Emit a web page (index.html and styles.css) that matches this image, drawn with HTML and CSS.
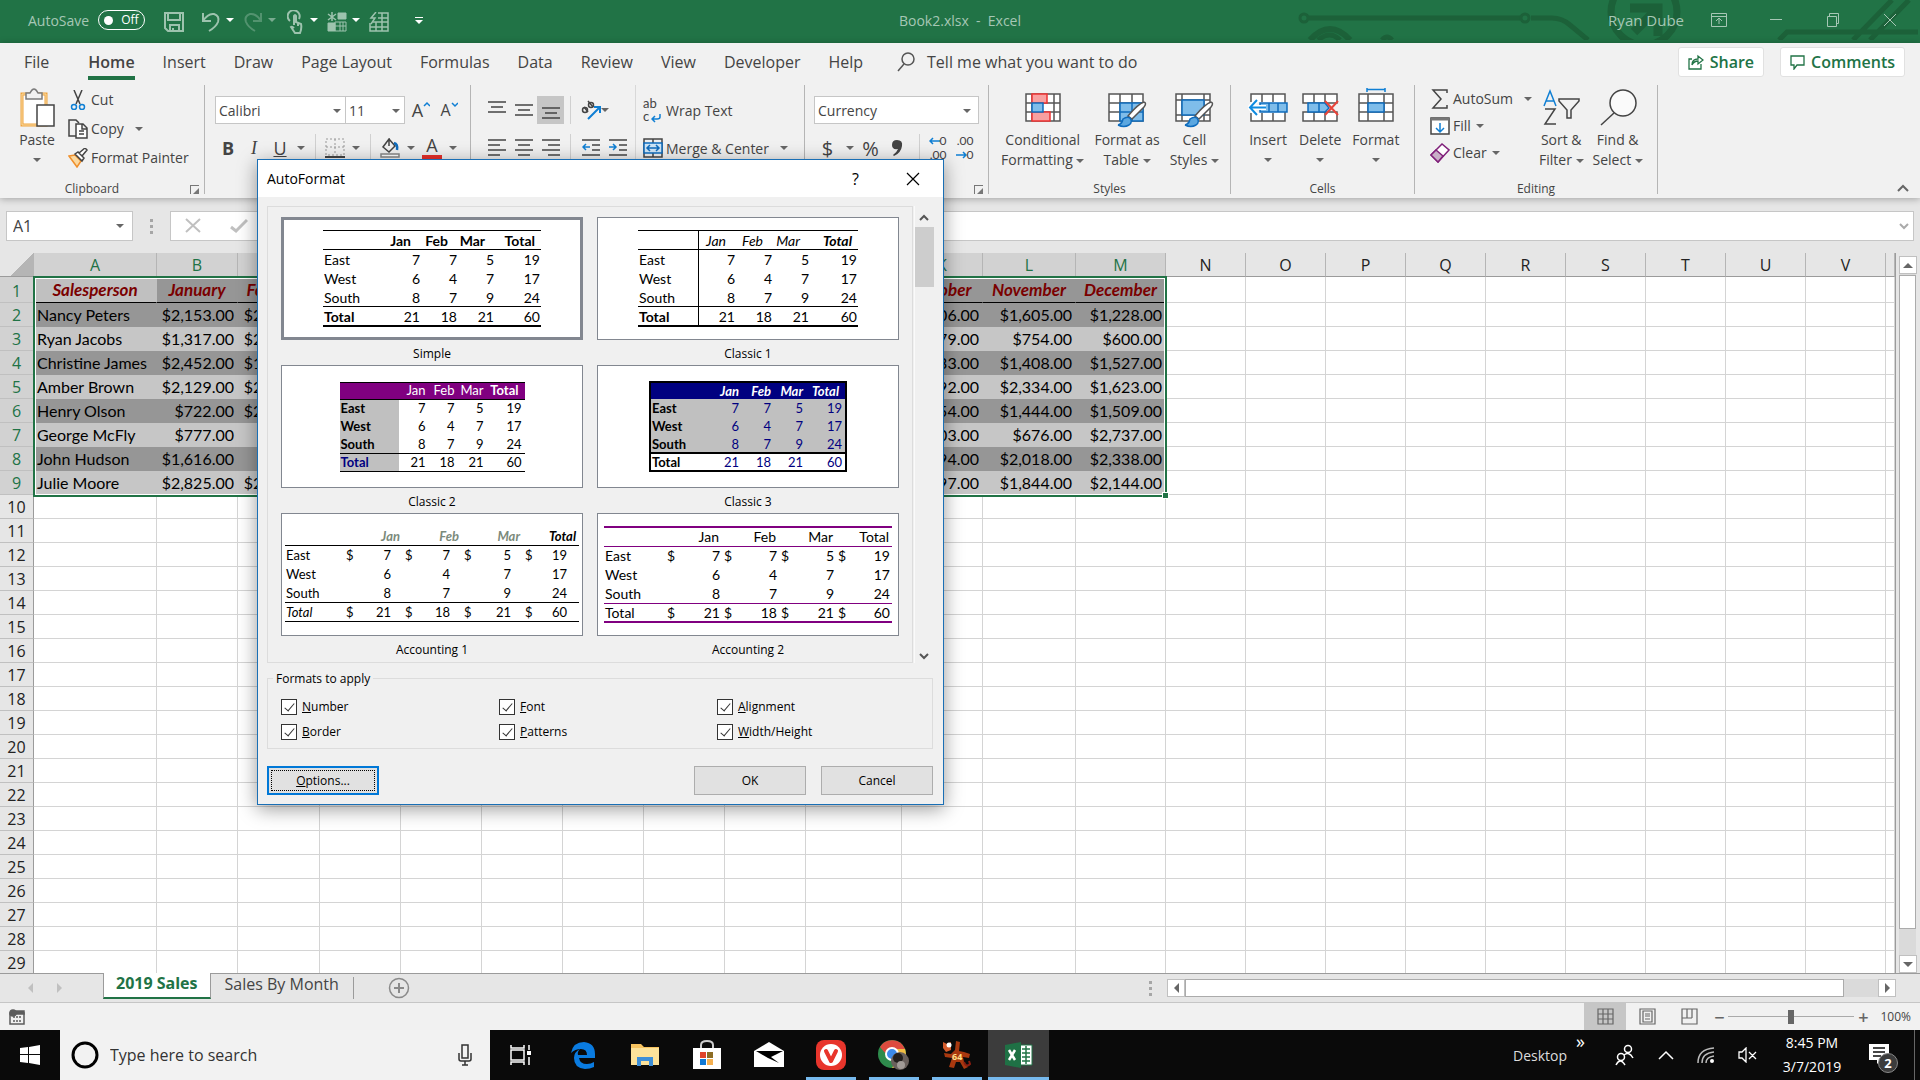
FILE: index.html
```html
<!DOCTYPE html>
<html lang="en">
<head>
    <meta charset="UTF-8">
    <meta name="viewport" content="width=device-width, initial-scale=1.0">
    <title>Book2.xlsx - Excel</title>
    <link rel="stylesheet" href="styles.css">
</head>
<body>
    <header class="titlebar">
        <svg class="circuit" width="624" height="40" viewBox="0 0 624 40" fill="none" stroke="#1c6139" stroke-width="5">
            <circle cx="8" cy="18" r="4" stroke-width="3"/>
            <path d="M13 18H224M235 18H256Q266 18 274 25L292 40"/>
            <circle cx="229" cy="18" r="4" stroke-width="3"/>
            <path d="M14 40Q34 18 54 40" stroke-width="6"/><path d="M22 40Q34 30 44 40M86 40Q91 34 96 40"/>
            <circle cx="348" cy="12" r="33" stroke-width="7"/>
            <path d="M334 8H362V36M362 8L338 32" stroke-width="9"/>
            <path d="M483 40L491 32H622M557 40L596 0M574 40L613 0"/>
        </svg>
        <div class="title-left">
            <span class="autosave">AutoSave</span>
            <button class="toggle"><span class="dot"></span>Off</button>
            <button class="qa save"><svg width="20" height="20" viewBox="0 0 20 20" fill="none" stroke="currentColor" stroke-width="2"><path d="M1 1h18v18H4l-3-3zM4 1v7h12V1M6 19v-6h9v6M9 19v-3"/></svg></button>
            <button class="qa"><svg width="20" height="22" viewBox="0 0 20 22" fill="none" stroke="currentColor" stroke-width="2"><path d="M2 2v8h8M2 10Q7 2 13 3Q19 5 17 11Q15 16 8 20"/></svg></button>
            <span class="caret light"></span>
            <button class="qa dim"><svg width="20" height="22" viewBox="0 0 20 22" fill="none" stroke="currentColor" stroke-width="2"><path d="M18 2v8h-8M18 10Q13 2 7 3Q1 5 3 11Q5 16 12 20"/></svg></button>
            <span class="caret light dim"></span>
            <button class="qa"><svg width="16" height="24" viewBox="0 0 16 24" fill="none" stroke="currentColor" stroke-width="2"><path d="M3 11A6 6 0 1 1 12 9"/><path d="M7 15V6q1-2 2 0v6l5 2q1 4-1 9H8l-4-6q1-1 3 1M11 12v4"/></svg></button>
            <span class="caret light"></span>
            <button class="qa"><svg width="20" height="20" viewBox="0 0 20 20" fill="none" stroke="currentColor"><path fill="currentColor" d="M11 1h8v6h-8zM1 11h7v8H1z"/><path d="M5 0v9M1 2l8 6M9 2L1 8" stroke-width="1.500"/><path d="M8 10h11v9H8zM8 14h11M13 10v9M16 10v9"/></svg></button>
            <span class="caret light"></span>
            <button class="qa"><svg width="20" height="20" viewBox="0 0 20 20" fill="none" stroke="currentColor" stroke-width="1.500"><path d="M9 1h10v18H1v-8M1 15h18M4 10h15M9 6h10M7 10v9M13 1v18"/><path d="M7 0L2 6h4l-4 6" /></svg></button>
            <span class="customize"><i></i><span class="caret light"></span></span>
        </div>
        <div class="title-name">Book2.xlsx&nbsp; -&nbsp; Excel</div>
        <div class="title-right">
            <span class="user">Ryan Dube</span>
            <button class="win"><svg width="16" height="14" viewBox="0 0 16 14" fill="none" stroke="currentColor"><path d="M.5.500h15v13H.5zM.5 3.500h15M8 11V6M5 8l3-3 3 3"/></svg></button>
            <button class="win"><svg width="14" height="14" viewBox="0 0 14 14" stroke="currentColor"><path d="M1 6.500h12"/></svg></button>
            <button class="win"><svg width="14" height="14" viewBox="0 0 14 14" fill="none" stroke="currentColor"><path d="M1.500 3.500h9v10h-9zM3.500 3V.5h9v10H11"/></svg></button>
            <button class="win"><svg width="14" height="14" viewBox="0 0 14 14" stroke="currentColor"><path d="M1 1l12 12M13 1L1 13"/></svg></button>
        </div>
    </header>

    <section class="ribbon">
        <nav class="tabs">
            <a href="#" class="file">File</a>
            <a href="#" class="active">Home</a>
            <a href="#">Insert</a>
            <a href="#">Draw</a>
            <a href="#">Page Layout</a>
            <a href="#">Formulas</a>
            <a href="#">Data</a>
            <a href="#">Review</a>
            <a href="#">View</a>
            <a href="#">Developer</a>
            <a href="#">Help</a>
            <a href="#" class="tell"><svg width="18" height="20" viewBox="0 0 18 20" fill="none" stroke="#555" stroke-width="1.500"><circle cx="11" cy="7" r="6"/><path d="M7 12L1 19"/></svg>Tell me what you want to do</a>
            <button class="pill share"><svg width="16" height="16" viewBox="0 0 16 16" fill="none" stroke="#217346" stroke-width="1.300"><path d="M4 5H1v10h12v-5M4 11q0-6 6-6V2l5 4-5 4V7Q6 7 4 11"/></svg>Share</button>
            <button class="pill"><svg width="15" height="15" viewBox="0 0 15 15" fill="none" stroke="#217346" stroke-width="1.300"><path d="M1 1h13v9H7l-3 4v-4H1z"/></svg>Comments</button>
        </nav>

        <div class="groups">
            <div class="group clipboard">
                <div class="body">
                    <button class="big paste">
                        <svg width="36" height="40" viewBox="0 0 36 40"><path d="M3 6h24v31H3z" fill="#fff" stroke="#f0a33c" stroke-width="3"/><path d="M3 6h24v31H3z" fill="none" stroke="#f8dca6" /><path d="M7 11V5h4q4-8 8 0h4v6z" fill="#f1f1f1" stroke="#7b7b7b" stroke-width="1.500"/><path d="M18 17h17v21H18z" fill="#fff" stroke="#444" stroke-width="1.500"/></svg>
                        <span>Paste</span><span class="caret"></span>
                    </button>
                    <div class="stack">
                        <button class="line"><svg width="20" height="20" viewBox="0 0 20 20" fill="none" stroke="#444" stroke-width="1.500"><path d="M6 0l6 14M14 0L8 14"/><circle cx="6" cy="17" r="2.500" stroke="#0f7fd4"/><circle cx="14" cy="17" r="2.500" stroke="#0f7fd4"/></svg>Cut</button>
                        <button class="line"><svg width="20" height="20" viewBox="0 0 20 20" fill="none" stroke="#444" stroke-width="1.500"><path d="M8 17H1V1h7l3 3"/><path d="M8 5h7l4 4v10H8zM14 5v5h5M11 12h5M11 15h5" fill="#fff"/></svg>Copy<span class="caret"></span></button>
                        <button class="line"><svg width="20" height="20" viewBox="0 0 20 20" fill="none" stroke="#444" stroke-width="1.500"><path d="M1 8l6-1 6 6-4 6z" fill="#fbd9a0" stroke="#f0902c"/><path d="M7 6l7 7 2-3-6-6zM11 5l6-5 2 2-5 6" fill="#fff"/></svg>Format Painter</button>
                    </div>
                </div>
                <div class="label">Clipboard<i class="launch"></i></div>
            </div>

            <div class="group font">
                <div class="body col">
                    <div class="row">
                        <span class="combo face"><select aria-label="Font"><option>Calibri</option></select><i class="caret"></i></span>
                        <span class="combo size"><select aria-label="Font size"><option>11</option></select><i class="caret"></i></span>
                        <button class="tool"><span class="glyph">A</span><svg width="7" height="18" viewBox="0 0 7 18" fill="none" stroke="#0f7fd4" stroke-width="1.500"><path d="M1 5l3-3 3 3"/></svg></button>
                        <button class="tool"><span class="glyph small">A</span><svg width="7" height="18" viewBox="0 0 7 18" fill="none" stroke="#0f7fd4" stroke-width="1.500"><path d="M1 2l3 3 3-3"/></svg></button>
                    </div>
                    <div class="row second">
                        <button class="tool"><b>B</b></button>
                        <button class="tool"><em class="italic">I</em></button>
                        <button class="tool"><u>U</u></button>
                        <i class="caret"></i><i class="sep"></i>
                        <button class="tool"><svg width="20" height="20" viewBox="0 0 20 20" stroke="#999" fill="none"><path d="M1 1h18v16H1zM10 1v16M1 9h18" stroke-dasharray="2 2"/><path d="M0 19h20" stroke="#444" stroke-width="2"/></svg></button>
                        <i class="caret"></i><i class="sep"></i>
                        <button class="tool"><svg width="20" height="20" viewBox="0 0 20 20" fill="none" stroke="#444" stroke-width="1.500"><path d="M9 1l6 7-6 6-6-5 6-8v7"/><path d="M14 5q4 1 3 7" stroke="#0f6cbd" stroke-width="2.500"/><path d="M1 16h18v3H1z" fill="#fff" stroke="#888"/></svg></button>
                        <i class="caret"></i>
                        <button class="tool"><span class="fontcolor">A</span></button>
                        <i class="caret"></i>
                    </div>
                </div>
            </div>

            <div class="group align">
                <div class="body">
                    <div class="col">
                        <div class="row">
                            <button class="tool"><svg width="18" height="18" viewBox="0 0 18 18" stroke="#444" stroke-width="1.500"><path d="M0 1h18M3 6h12M0 11h18"/></svg></button>
                            <button class="tool"><svg width="18" height="18" viewBox="0 0 18 18" stroke="#444" stroke-width="1.500"><path d="M0 4h18M3 9h12M0 14h18"/></svg></button>
                            <button class="tool pressed"><svg width="18" height="18" viewBox="0 0 18 18" stroke="#444" stroke-width="1.500"><path d="M0 7h18M3 12h12M0 17h18"/></svg></button>
                            <i class="sep"></i>
                            <button class="tool"><svg width="20" height="20" viewBox="0 0 20 20" fill="none" stroke="#444" stroke-width="1.500"><circle cx="4" cy="10" r="2.500"/><path d="M3 7l4 5M7 1l5 6"/><circle cx="10" cy="5" r="2.500"/><path d="M7 19L19 7M13 7h6v6" stroke="#0f7fd4" stroke-width="2"/></svg></button>
                            <i class="caret"></i>
                        </div>
                        <div class="row second">
                            <button class="tool"><svg width="18" height="18" viewBox="0 0 18 18" stroke="#444" stroke-width="1.500"><path d="M0 1h18M0 6h12M0 11h18M0 16h12"/></svg></button>
                            <button class="tool"><svg width="18" height="18" viewBox="0 0 18 18" stroke="#444" stroke-width="1.500"><path d="M0 1h18M3 6h12M0 11h18M3 16h12"/></svg></button>
                            <button class="tool"><svg width="18" height="18" viewBox="0 0 18 18" stroke="#444" stroke-width="1.500"><path d="M0 1h18M6 6h12M0 11h18M6 16h12"/></svg></button>
                            <i class="sep"></i>
                            <button class="tool"><svg width="18" height="18" viewBox="0 0 18 18" fill="none" stroke="#444" stroke-width="1.500"><path d="M0 1h18M10 6h8M10 11h8M0 16h18"/><path d="M8 8H1M4 5L1 8l3 3" stroke="#0f7fd4"/></svg></button>
                            <button class="tool"><svg width="18" height="18" viewBox="0 0 18 18" fill="none" stroke="#444" stroke-width="1.500"><path d="M0 1h18M10 6h8M10 11h8M0 16h18"/><path d="M0 8h7M4 5l3 3-3 3" stroke="#0f7fd4"/></svg></button>
                        </div>
                    </div>
                    <div class="col wrapcol">
                        <button class="row line"><span class="abc">ab<br>c<svg width="10" height="9" viewBox="0 0 10 9" fill="none" stroke="#0f7fd4" stroke-width="1.500"><path d="M9 0v3q0 2-3 2H1M4 2L1 5l3 3"/></svg></span>Wrap Text</button>
                        <button class="row second line"><svg width="20" height="20" viewBox="0 0 20 20" fill="none" stroke="#444" stroke-width="1.500"><path d="M1 1h18v18H1zM10 1v4M10 15v4"/><path d="M1 5h18v10H1z" fill="#cfe6f7" stroke="#0f6cbd"/><path d="M4 10h12M7 7l-3 3 3 3M13 7l3 3-3 3" stroke="#0f6cbd"/></svg>Merge &amp; Center<span class="caret"></span></button>
                    </div>
                </div>
            </div>

            <div class="group number">
                <div class="body col">
                    <div class="row"><span class="combo wide"><select aria-label="Number format"><option>Currency</option></select><i class="caret"></i></span></div>
                    <div class="row second">
                        <button class="tool"><span class="sign">$</span></button><i class="caret"></i>
                        <button class="tool"><span class="sign">%</span></button>
                        <button class="tool"><svg width="11" height="16" viewBox="0 0 11 16"><path d="M5 0Q11 0 10 6Q9 13 2 16L1 15Q5 12 6 9Q0 10 0 5Q0 0 5 0" fill="#444"/></svg></button>
                        <i class="sep"></i>
                        <button class="tool"><span class="dec"><svg width="11" height="8" viewBox="0 0 11 8" fill="none" stroke="#0f7fd4" stroke-width="1.500"><path d="M11 4H1M4 1L1 4l3 3"/></svg>0<br>.00</span></button>
                        <button class="tool"><span class="dec">.00<br><svg width="11" height="8" viewBox="0 0 11 8" fill="none" stroke="#0f7fd4" stroke-width="1.500"><path d="M0 4h10M7 1l3 3-3 3"/></svg>0</span></button>
                    </div>
                </div>
                <div class="label"><i class="launch"></i></div>
            </div>

            <div class="group styles">
                <div class="body">
                    <button class="big">
                        <svg width="40" height="40" viewBox="0 0 40 40" fill="none" stroke="#555" stroke-width="1.500"><path d="M3 6h34v27H3zM9 6v27M31 6v27M3 15h34M3 24h34" fill="#fff"/><path d="M9 6h15v9H9zM9 24h18v9H9z" fill="#f8a0a0" stroke="#e33"/><path d="M9 15h11v9H9z" fill="#7fbdea" stroke="#0f6cbd"/></svg>
                        <span>Conditional</span><span>Formatting <i class="caret"></i></span>
                    </button>
                    <button class="big">
                        <svg width="40" height="40" viewBox="0 0 40 40" fill="none" stroke="#555" stroke-width="1.500"><path d="M2 6h34v27H2zM13 6v27M25 6v27M2 15h34M2 24h34" fill="#fff"/><path d="M13 15h23v18H13zM13 24h23M25 15v18" fill="#7fbdea" stroke="#0f6cbd"/><path d="M37 14q3 1 0 5L25 31l-4-3Q31 16 37 14" fill="#fff"/><path d="M11 37q4-1 5-6 4-3 7-1 3 4-1 7-5 3-11 0" fill="#5ba7e0" stroke="#0f6cbd"/></svg>
                        <span>Format as</span><span>Table <i class="caret"></i></span>
                    </button>
                    <button class="big">
                        <svg width="40" height="40" viewBox="0 0 40 40" fill="none" stroke="#555" stroke-width="1.500"><path d="M2 6h34v27H2zM8 6v27M30 6v27M2 12h34M2 27h34" fill="#fff"/><path d="M8 12h22v15H8z" fill="#7fbdea" stroke="#0f6cbd"/><path d="M37 14q3 1 0 5L25 31l-4-3Q31 16 37 14" fill="#fff"/><path d="M11 37q4-1 5-6 4-3 7-1 3 4-1 7-5 3-11 0" fill="#5ba7e0" stroke="#0f6cbd"/></svg>
                        <span>Cell</span><span>Styles <i class="caret"></i></span>
                    </button>
                </div>
                <div class="label">Styles</div>
            </div>

            <div class="group cells">
                <div class="body">
                    <button class="big">
                        <svg width="40" height="40" viewBox="0 0 40 40" fill="none" stroke="#555" stroke-width="1.500"><path d="M3 14V6h34v9M3 25v8h34v-9M14 6v8M25 6v8M14 25v8M25 25v8" fill="#fff"/><path d="M12 15h27v9H12zM21 15v9M30 15v9" fill="#7fbdea" stroke="#0f6cbd"/><path d="M18 19.500H2M9 12l-7 7.500L9 27" stroke="#fff" stroke-width="5"/><path d="M18 19.500H2M9 12l-7 7.500L9 27" stroke="#0f8be0" stroke-width="2"/></svg>
                        <span>Insert</span><span class="caret"></span>
                    </button>
                    <button class="big">
                        <svg width="40" height="40" viewBox="0 0 40 40" fill="none" stroke="#555" stroke-width="1.500"><path d="M3 15V6h34v9zM3 24v9h34v-9zM14 6v9M25 6v9M14 24v9M25 24v9" fill="#fff"/><path d="M8 15h17l4 5-4 4H8zM19 15v9" fill="#7fbdea" stroke="#0f6cbd"/><path d="M25 13l13 14M38 13L25 27" stroke="#e8443a" stroke-width="2"/></svg>
                        <span>Delete</span><span class="caret"></span>
                    </button>
                    <button class="big">
                        <svg width="40" height="40" viewBox="0 0 40 40" fill="none" stroke="#555" stroke-width="1.500"><path d="M3 6h34v27H3zM12 6v27M28 6v27M3 15h34M3 24h34" fill="#fff"/><path d="M12 15h16v9H12z" fill="#7fbdea" stroke="#0f6cbd"/><path d="M11 1.500h18M11 0v4M29 0v4" stroke="#0f7fd4"/></svg>
                        <span>Format</span><span class="caret"></span>
                    </button>
                </div>
                <div class="label">Cells</div>
            </div>

            <div class="group editing">
                <div class="body">
                    <div class="stack">
                        <button class="line"><svg width="20" height="20" viewBox="0 0 20 20" fill="none" stroke="#444" stroke-width="1.500"><path d="M17 4V1H3l8 9-8 9h14v-3"/></svg>AutoSum<span class="caret far"></span></button>
                        <button class="line"><svg width="20" height="18" viewBox="0 0 20 18" fill="none" stroke="#444" stroke-width="1.500"><path d="M1 1h18v16H1z" fill="#fff"/><path d="M1 2h18" stroke-width="3" stroke="#777"/><path d="M10 6v8M6 11l4 4 4-4" stroke="#0f7fd4"/></svg>Fill<span class="caret"></span></button>
                        <button class="line"><svg width="20" height="20" viewBox="0 0 20 20" stroke="#80207a" stroke-width="1.500"><path d="M1 12L12 1l7 6L8 19z" fill="#fff"/><path d="M1 12l5-5 7 6-5 6z" fill="#c9aec7"/></svg>Clear<span class="caret"></span></button>
                    </div>
                    <button class="big">
                        <svg width="40" height="40" viewBox="0 0 40 40" fill="none" stroke="#444" stroke-width="1.500"><path d="M3 18L9 3l6 15M5 13h8" stroke="#0f7fd4"/><path d="M4 21h10L4 36h11M18 11h20v2l-8 9v8h-4v-8l-8-9z"/></svg>
                        <span>Sort &amp;</span><span>Filter <i class="caret"></i></span>
                    </button>
                    <button class="big">
                        <svg width="40" height="40" viewBox="0 0 40 40" fill="none" stroke="#444" stroke-width="1.500"><circle cx="25" cy="15" r="13" fill="#fafafa"/><path d="M16 25L3 37"/></svg>
                        <span>Find &amp;</span><span>Select <i class="caret"></i></span>
                    </button>
                </div>
                <div class="label">Editing</div>
            </div>
            <button class="collapse"><svg width="12" height="8" viewBox="0 0 12 8" fill="none" stroke="#666" stroke-width="2"><path d="M1 7l5-5 5 5"/></svg></button>
        </div>
    </section>

    <section class="formulabar">
        <span class="combo namebox"><input type="text" value="A1" aria-label="Name box"><i class="caret"></i></span>
        <span class="dots"><i></i><i></i><i></i></span>
        <div class="formula">
            <svg width="18" height="16" viewBox="0 0 18 16" stroke="#c0c0c0" stroke-width="2"><path d="M2 1l14 13M16 1L2 14"/></svg>
            <svg width="18" height="16" viewBox="0 0 18 16" fill="none" stroke="#c0c0c0" stroke-width="3"><path d="M1 9l5 4L17 2"/></svg>
            <input type="text" aria-label="Formula">
            <svg width="10" height="7" viewBox="0 0 10 7" fill="none" stroke="#aaa" stroke-width="2"><path d="M1 1l4 4 4-4"/></svg>
        </div>
    </section>

    <main class="sheet">
        <div class="gridwrap">
            <table class="grid">
                <colgroup id="gridCols"></colgroup>
                <thead><tr id="gridHead"></tr></thead>
                <tbody id="gridBody"></tbody>
            </table>
            <div class="selection"></div>
        </div>
        <div class="vscroll">
            <button><i class="tri up"></i></button>
            <div class="track"><div class="thumb"></div></div>
            <button><i class="tri down"></i></button>
        </div>
    </main>

    <section class="sheettabs">
        <i class="tri left pale"></i><i class="tri right pale"></i>
        <a href="#" class="sheettab current">2019 Sales</a>
        <a href="#" class="sheettab">Sales By Month</a>
        <button class="addsheet" aria-label="New sheet"><svg width="22" height="22" viewBox="0 0 22 22" fill="none" stroke="#8a8a8a" stroke-width="1.500"><circle cx="11" cy="11" r="9.500"/><path d="M6 11h10M11 6v10" stroke-width="2"/></svg></button>
        <span class="dots"><i></i><i></i><i></i></span>
        <div class="hscroll">
            <button><i class="tri left"></i></button>
            <div class="track"><div class="thumb"></div></div>
            <button><i class="tri right"></i></button>
        </div>
    </section>

    <footer class="status">
        <svg class="macro" width="16" height="16" viewBox="0 0 16 16" fill="none" stroke="#5c5c5c" stroke-width="1.500"><path d="M1 4h14v11H1z"/><path d="M4 8h9M4 12h9" stroke-dasharray="2 1"/><path d="M7 2h8v3H7z" fill="#5c5c5c"/><circle cx="4" cy="4" r="3" fill="#5c5c5c"/></svg>
        <button class="view on"><svg width="17" height="17" viewBox="0 0 17 17" fill="none" stroke="#666" stroke-width="1.200"><path d="M1 1h15v15H1zM6 1v15M11 1v15M1 6h15M1 11h15"/></svg></button>
        <button class="view"><svg width="17" height="17" viewBox="0 0 17 17" fill="none" stroke="#666" stroke-width="1.200"><path d="M1 1h15v15H1zM4 3h9v11H4zM6 6h5M6 8h5M6 11h5"/></svg></button>
        <button class="view"><svg width="17" height="17" viewBox="0 0 17 17" fill="none" stroke="#666" stroke-width="1.200"><path d="M1 1h15v15H1zM6 1v9M11 1v9M1 10h10"/></svg></button>
        <button class="zoom">−</button>
        <input class="slider" type="range" min="0" max="100" value="50" aria-label="Zoom">
        <button class="zoom">+</button>
        <span class="percent">100%</span>
    </footer>

    <footer class="taskbar">
        <button class="start"><svg width="20" height="20" viewBox="0 0 20 20" fill="#fff"><path d="M0 3l8-1v7H0zM9 2l11-2v9H9zM0 10h8v8l-8-1zM9 10h11v10L9 18z"/></svg></button>
        <label class="search">
            <svg width="28" height="28" viewBox="0 0 28 28" fill="none"><circle cx="14" cy="14" r="12" stroke="#000" stroke-width="3"/></svg>
            <input type="text" placeholder="Type here to search" aria-label="Search">
            <svg width="14" height="22" viewBox="0 0 14 22" fill="none" stroke="#333" stroke-width="1.500"><path d="M4 1h6v13H4zM1 9v6q0 2 2 2h8q2 0 2-2V9M7 17v4M4 21h6"/></svg>
        </label>
        <button class="app"><svg width="22" height="20" viewBox="0 0 22 20" fill="none" stroke="#fff" stroke-width="1.500"><path d="M1 0v3h13V0M1 5h13v10H1zM1 20v-3h13v3M19 0v5M19 12v8"/><path d="M17 6h4v4h-4z" fill="#fff" stroke="none"/></svg></button>
        <button class="app"><svg width="26" height="28" viewBox="0 0 26 28"><path d="M1 12Q3 1 14 1q11 1 11 12v4H9q1 6 8 6 4 0 7-2v5q-4 2-9 2Q4 27 4 17q0-6 6-9-3 3-2 6h9q0-6-6-6Q5 8 1 12" fill="#0a7be0"/></svg></button>
        <button class="app"><svg width="28" height="26" viewBox="0 0 28 26"><path d="M0 2h10l3 3h15v18H0z" fill="#f7c35f"/><path d="M0 6h28v17H0z" fill="#fce29a"/><path d="M6 24v-9h16v9h-4v-5h-8v5z" fill="#3d8fd8"/></svg></button>
        <button class="app"><svg width="30" height="30" viewBox="0 0 30 30"><path d="M9 9V5q0-4 6-4t6 4v4" fill="none" stroke="#ccc" stroke-width="2"/><path d="M1 8h28v21H1z" fill="#fff"/><path d="M8 12h6v6H8z" fill="#e0442c"/><path d="M15 12h6v6h-6z" fill="#8c6c24"/><path d="M8 19h6v6H8z" fill="#0f78d4"/><path d="M15 19h6v6h-6z" fill="#f5b050"/></svg></button>
        <button class="app"><svg width="30" height="26" viewBox="0 0 30 26"><path d="M0 9L15 0l15 9v16H0z" fill="#fff"/><path d="M2 9h27l-12 6 8 6-11-5z" fill="#000"/></svg></button>
        <button class="app open"><svg width="30" height="30" viewBox="0 0 30 30"><rect width="30" height="30" rx="8" fill="#e8352c"/><circle cx="15" cy="15" r="11" fill="#fff"/><path d="M10 11l5 10 5-10" fill="none" stroke="#e8352c" stroke-width="4" stroke-linecap="round" stroke-linejoin="round"/></svg></button>
        <button class="app open"><svg width="32" height="32" viewBox="0 0 32 32"><circle cx="14" cy="15" r="14" fill="#2e8b4c"/><path d="M2 8a14 14 0 0 1 25 2H14a6 6 0 0 0-6 5z" fill="#dd4b3e"/><path d="M27 10a14 14 0 0 1-13 19l6-11q1-4-2-8z" fill="#f3bd42"/><circle cx="14" cy="15" r="6" fill="#3d8bea" stroke="#fff" stroke-width="2"/><circle cx="22" cy="22" r="9" fill="#6a605c"/><circle cx="20" cy="19" r="5" fill="#231f1d"/><circle cx="23" cy="26" r="4" fill="#a19a96"/></svg></button>
        <button class="app open"><svg width="30" height="30" viewBox="0 0 30 30"><path d="M13 10l1-9 4 1-1 9 5 1 6 2-1 4-6-1 1 5 4 5-4 2-4-7h-4l-2 6-5-1 3-9-7-1-1-4 7 1z" fill="#a8380f"/><path d="M1 2l4 2 4-2v8l-5 2-3-4z" fill="#d35b2c"/><circle cx="7" cy="5" r="2.500" fill="#fff"/><path d="M22 22q2 6 6 2l-1-3" fill="none" stroke="#8b1d10" stroke-width="2"/><text x="10" y="20" class="tigertext">64</text></svg></button>
        <button class="app open focus"><svg width="28" height="28" viewBox="0 0 28 28"><path d="M14 4h13v20H14z" fill="#fff" stroke="#217346"/><path d="M17 8h8M17 12h8M17 16h8M17 20h8M21 5v18" stroke="#217346" stroke-width="1.500"/><path d="M0 4l16-3v26L0 24z" fill="#1f7145"/><path d="M4 9l6 10M10 9L4 19" stroke="#fff" stroke-width="2.500"/></svg></button>
        <div class="tray">
            <span class="desktop">Desktop</span><span class="more">»</span>
            <svg width="20" height="22" viewBox="0 0 20 22" fill="none" stroke="#fff" stroke-width="1.500"><circle cx="13" cy="5" r="3.500"/><path d="M9 11q5-4 9 3M1 21q4-8 9 0"/><circle cx="6" cy="13" r="3.500"/></svg>
            <svg width="16" height="10" viewBox="0 0 16 10" fill="none" stroke="#fff" stroke-width="1.500"><path d="M1 9l7-7 7 7"/></svg>
            <svg width="18" height="18" viewBox="0 0 18 18" fill="none" stroke="#bbb" stroke-width="1.500"><path d="M1 17Q1 3 17 2M5 17Q5 7 17 6M9 17q0-6 8-7"/><circle cx="15" cy="15" r="2" fill="#fff" stroke="none"/></svg>
            <svg width="20" height="16" viewBox="0 0 20 16" fill="none" stroke="#fff" stroke-width="1.300"><path d="M1 5h3l4-4v14l-4-4H1zM11 5l7 7M18 5l-7 7"/></svg>
            <span class="clock">8:45 PM<br>3/7/2019</span>
            <span class="notice"><svg width="20" height="20" viewBox="0 0 20 20"><path d="M0 0h20v16h-8l-4 4v-4H0z" fill="#fff"/><path d="M4 4h12M4 8h12M4 12h8" stroke="#0a0a0a" stroke-width="1.500"/></svg><span class="count">2</span></span>
        </div>
    </footer>

    <div class="dialog" role="dialog" aria-label="AutoFormat">
        <div class="dialog-title">
            <span>AutoFormat</span>
            <button class="help">?</button>
            <button class="close"><svg width="14" height="14" viewBox="0 0 14 14" stroke="#000" stroke-width="1.200"><path d="M1 1l12 12M13 1L1 13"/></svg></button>
        </div>
        <div class="gallery">
            <div class="cards" id="cards"></div>
            <div class="gallery-scroll">
                <svg width="10" height="8" viewBox="0 0 10 8" fill="none" stroke="#555" stroke-width="2"><path d="M1 6l4-4 4 4"/></svg>
                <div class="gthumb"></div>
                <svg width="10" height="8" viewBox="0 0 10 8" fill="none" stroke="#555" stroke-width="2"><path d="M1 2l4 4 4-4"/></svg>
            </div>
        </div>
        <fieldset>
            <legend>Formats to apply</legend>
            <label><input type="checkbox" checked><span><u>N</u>umber</span></label>
            <label><input type="checkbox" checked><span><u>F</u>ont</span></label>
            <label><input type="checkbox" checked><span><u>A</u>lignment</span></label>
            <label><input type="checkbox" checked><span><u>B</u>order</span></label>
            <label><input type="checkbox" checked><span><u>P</u>atterns</span></label>
            <label><input type="checkbox" checked><span><u>W</u>idth/Height</span></label>
        </fieldset>
        <div class="dialog-buttons">
            <button class="options"><span><u>O</u>ptions...</span></button>
            <button>OK</button>
            <button>Cancel</button>
        </div>
    </div>

    <script>
        // Column widths of the worksheet, row headings first
        const widths = [34, 123, 81, 82, 81, 81, 81, 81, 81, 81, 96, 81, 93, 90, 80, 80, 80, 80, 80, 80, 80, 80, 80];
        const letters = 'ABCDEFGHIJKLMNOPQRSTUV'.split('');

        // Sales figures keyed by column letter
        const sales = [
            { A: 'Salesperson', B: 'January', C: 'February', K: 'October', L: 'November', M: 'December' },
            { A: 'Nancy Peters', B: '$2,153.00', C: '$2,100.00', K: '$1,206.00', L: '$1,605.00', M: '$1,228.00' },
            { A: 'Ryan Jacobs', B: '$1,317.00', C: '$2,100.00', K: '$1,279.00', L: '$754.00', M: '$600.00' },
            { A: 'Christine James', B: '$2,452.00', C: '$1,100.00', K: '$1,233.00', L: '$1,408.00', M: '$1,527.00' },
            { A: 'Amber Brown', B: '$2,129.00', C: '$2,100.00', K: '$1,292.00', L: '$2,334.00', M: '$1,623.00' },
            { A: 'Henry Olson', B: '$722.00', C: '$2,100.00', K: '$1,254.00', L: '$1,444.00', M: '$1,509.00' },
            { A: 'George McFly', B: '$777.00', K: '$1,203.00', L: '$676.00', M: '$2,737.00' },
            { A: 'John Hudson', B: '$1,616.00', K: '$1,294.00', L: '$2,018.00', M: '$2,338.00' },
            { A: 'Julie Moore', B: '$2,825.00', C: '$2,100.00', K: '$1,297.00', L: '$1,844.00', M: '$2,144.00' }
        ];

        function buildGrid() {
            document.getElementById('gridCols').innerHTML = widths.map(w => `<col style="width:${w}px">`).join('') + '<col>';

            let head = '<th class="corner"></th>';
            letters.forEach((letter, i) => {
                head += `<th class="${i < 13 ? 'sel' : ''}">${letter}</th>`;
            });
            document.getElementById('gridHead').innerHTML = head + '<th></th>';

            let rows = '';
            for (let r = 1; r <= 29; r++) {
                const data = sales[r - 1];
                rows += `<tr class="${data ? 'filled' : ''}"><th class="${data ? 'sel' : ''}">${r}</th>`;
                letters.forEach((letter, i) => {
                    rows += `<td class="${data && i < 13 ? 'data' : ''}">${data && data[letter] ? data[letter] : ''}</td>`;
                });
                rows += '<td></td></tr>';
            }
            document.getElementById('gridBody').innerHTML = rows;
        }

        // Gallery of table formats
        const formats = [
            { name: 'Simple', style: 'simple', cols: [60, 38, 37, 37, 46] },
            { name: 'Classic 1', style: 'classic1', cols: [60, 38, 37, 37, 48] },
            { name: 'Classic 2', style: 'classic2', cols: [59, 30, 29, 29, 38] },
            { name: 'Classic 3', style: 'classic3', cols: [60, 32, 32, 32, 40] },
            { name: 'Accounting 1', style: 'acc1', cols: [60, 59, 59, 61, 55], money: true },
            { name: 'Accounting 2', style: 'acc2', cols: [62, 57, 57, 57, 55], money: true }
        ];
        const regions = [
            ['East', 7, 7, 5, 19],
            ['West', 6, 4, 7, 17],
            ['South', 8, 7, 9, 24],
            ['Total', 21, 18, 21, 60]
        ];

        function buildCards() {
            document.getElementById('cards').innerHTML = formats.map(format => {
                const cols = format.cols.map(w => `<col style="width:${w}px">`).join('');
                const total = format.cols.reduce((sum, w) => sum + w, 0);
                const body = regions.map((region, i) => {
                    const cur = format.money && (i === 0 || i === 3) ? '<span class="cur">$</span>' : '';
                    return `<tr><th>${region[0]}</th>` + region.slice(1).map(n => `<td>${cur}${n}</td>`).join('') + '</tr>';
                }).join('');
                return `
                    <figure>
                        <div class="card">
                            <table class="${format.style}" style="width:${total}px">
                                <colgroup>${cols}</colgroup>
                                <thead><tr><th></th><th>Jan</th><th>Feb</th><th>Mar</th><th>Total</th></tr></thead>
                                <tbody>${body}</tbody>
                            </table>
                        </div>
                        <figcaption>${format.name}</figcaption>
                    </figure>`;
            }).join('');
        }

        buildGrid();
        buildCards();
    </script>
</body>
</html>
```
FILE: styles.css
```css
* { margin: 0; padding: 0; box-sizing: border-box; }
body { height: 100vh; display: flex; flex-direction: column; overflow: hidden; position: relative; font-family: "Open Sans", "Noto Sans", sans-serif; font-size: 14px; color: #444; background: #e6e6e6; }
button { font: inherit; color: inherit; background: none; border: none; }
input, select { font: inherit; color: inherit; border: none; outline: none; background: none; }
a { color: inherit; text-decoration: none; }
svg { display: block; flex: none; }
.caret { display: inline-block; flex: none; width: 0; height: 0; border: 4px solid transparent; border-top-color: #666; border-bottom: none; }
.caret.light { border-top-color: #fff; }

/* title bar */
.titlebar { position: relative; flex: none; height: 43px; padding-bottom: 3px; background: #217346; color: #a6c7b5; display: grid; grid-template-columns: 1fr auto 1fr; align-items: center; }
.circuit { position: absolute; right: 0; top: 0; }
.title-left { display: flex; align-items: center; padding-left: 28px; }
.autosave { margin-right: 9px; }
.toggle { display: flex; align-items: center; gap: 8px; width: 47px; height: 20px; padding-left: 5px; border: 1px solid #fff; border-radius: 10px; color: #fff; font-size: 12px; line-height: 16px; }
.toggle .dot { width: 9px; height: 9px; border-radius: 50%; background: #fff; }
.qa { width: 20px; margin: 4px 5px 0 9px; color: #9dc3ae; }
.qa.save { margin-left: 19px; margin-right: 8px; }
.dim { opacity: .4; }
.qa svg { margin: 0 auto; }
.customize { margin-left: 21px; display: flex; flex-direction: column; align-items: center; gap: 2px; }
.customize i { width: 8px; height: 1px; background: #fff; }
.title-right { position: relative; display: flex; justify-content: flex-end; align-items: center; padding-right: 2px; }
.user { margin-right: 6px; font-size: 15px; }
.win { width: 57px; }
.win svg { margin: 0 auto; }

/* ribbon */
.ribbon { position: relative; flex: none; height: 155px; background: #f1f1f1; box-shadow: 0 1px 7px rgba(0, 0, 0, .3); }
.tabs { display: flex; align-items: center; gap: 28px; height: 38px; padding: 0 15px 0 24px; font-size: 16px; }
.tabs a { display: flex; align-items: center; height: 36px; border-bottom: 4px solid transparent; border-top: 4px solid transparent; }
.tabs .file { margin-right: 11px; }
.tabs .active { font-weight: 600; border-bottom-color: #217346; }
.tabs .tell { gap: 12px; margin-left: 6px; }
.pill { display: flex; align-items: center; gap: 6px; height: 30px; padding: 0 9px; background: #fff; border: 1px solid #e1e1e1; border-radius: 3px; color: #217346; font-weight: 600; }
.pill.share { margin-left: auto; margin-right: -12px; }
.groups { display: flex; padding-top: 4px; }
.group { position: relative; flex: none; height: 109px; border-right: 1px solid #b5b5b5; }
.clipboard { width: 205px; }
.font { width: 266px; }
.align { width: 334px; }
.number { width: 184px; }
.styles { width: 242px; }
.cells { width: 184px; }
.editing { width: 243px; }
.body { display: flex; height: 90px; }
.col { display: flex; flex-direction: column; }
.label { position: relative; display: flex; justify-content: center; height: 27px; padding-right: 20px; font-size: 12px; line-height: 27px; }
.styles .label, .cells .label, .editing .label { padding-right: 0; }
.launch { position: absolute; right: 5px; top: 10px; width: 9px; height: 9px; border-left: 1px solid #777; border-top: 1px solid #777; }
.launch::after { content: ""; position: absolute; right: 0; bottom: 0; border: 3px solid #777; border-left-color: transparent; border-top-color: transparent; }
.big { display: flex; flex-direction: column; align-items: center; padding-top: 3px; line-height: 20px; white-space: nowrap; }
.big svg { margin-bottom: 2px; }
.big > .caret { margin-top: 8px; }
.big .caret { vertical-align: middle; }
.stack { display: flex; flex-direction: column; }
.line { display: flex; align-items: center; gap: 3px; height: 29px; white-space: nowrap; }
.line .caret { margin-left: 8px; }
.clipboard .body { padding-left: 19px; }
.clipboard .stack { padding: 0 0 0 13px; }
.row { display: flex; align-items: center; height: 28px; margin-top: 11px; }
.row.second { margin-top: 10px; }
.tool { display: flex; align-items: center; justify-content: center; width: 27px; height: 28px; font-size: 18px; }
.glyph { line-height: 18px; }
.glyph.small { font-size: 16px; }
.italic { font-family: "Liberation Serif", serif; }
.sep { width: 1px; height: 28px; margin: 0 6px; background: #d0d0d0; }
.font .body { padding-left: 10px; }
.font .row:first-child .tool { width: 28px; }
.font .row .size { margin-left: -1px; margin-right: 2px; }
.font .caret { margin: 0 4px; }
.font .second .tool { width: 26px; }
.fontcolor { display: block; width: 20px; height: 26px; line-height: 20px; border-bottom: 6px solid #e8302a; }
.combo { position: relative; display: flex; align-items: center; height: 28px; background: #fff; border: 1px solid #c6c6c6; }
.combo select, .combo input { width: 100%; height: 100%; padding-left: 3px; appearance: none; }
.combo .caret { position: absolute; right: 4px; top: 12px; margin: 0; }
.face { width: 131px; }
.size { width: 60px; }
.wide { width: 165px; }
.align .body { padding-left: 12px; }
.align .col:first-child { width: 152px; }
.align .col:first-child .tool + .caret { margin-left: -3px; }
.pressed { background: #c6c6c6; }
.wrapcol { padding-left: 7px; border-left: 1px solid #d8d8d8; }
.abc { position: relative; width: 20px; font-family: Lato, sans-serif; font-size: 13px; line-height: 13px; text-align: left; }
.abc svg { position: absolute; left: 8px; bottom: 0; }
.number .body { padding-left: 9px; }
.number .sep { margin: 0 4px 0 8px; }
.number .caret { margin: 0 3px 0 5px; }
.sign { font-size: 20px; }
.dec { font-family: Lato, sans-serif; font-size: 12px; line-height: 14px; text-align: right; }
.dec svg { display: inline-block; }
.number .label { padding: 0; }
.styles .body { padding-left: 12px; gap: 10px; }
.cells .body { padding-left: 17px; gap: 11px; }
.editing .body { padding-left: 15px; }
.editing .line { height: 27px; }
.editing .line .caret { margin-left: 2px; }
.editing .line .far { margin-left: 8px; }
.editing .stack { width: 109px; }
.editing .big { margin-right: 9px; }
.collapse { position: absolute; right: 11px; bottom: 6px; }

/* formula bar */
.formulabar { flex: none; display: flex; align-items: flex-start; height: 55px; padding: 13px 6px 0; }
.namebox { width: 127px; height: 30px; font-size: 16px; }
.namebox input { padding-left: 6px; }
.namebox .caret { right: 8px; }
.dots { display: flex; flex-direction: column; gap: 3px; margin: 8px 17px; }
.dots i { width: 3px; height: 3px; background: #a6a6a6; }
.formula { flex: 1; display: flex; align-items: center; gap: 28px; height: 30px; padding: 0 4px 0 13px; background: #fff; border: 1px solid #c6c6c6; }
.formula input { flex: 1; }

/* worksheet */
.sheet { flex: 1; min-height: 0; display: flex; }
.gridwrap { position: relative; flex: 1; min-width: 0; overflow: hidden; }
.grid { width: 100%; table-layout: fixed; border-collapse: separate; border-spacing: 0; background: #fff; }
.grid th { height: 24px; font-weight: normal; font-size: 16px; line-height: 22px; color: #222; background: #e6e6e6; border-right: 1px solid #b5b5b5; border-bottom: 1px solid #c0c0c0; }
.grid thead th { height: 24px; border-bottom-color: #9b9b9b; }
.grid tbody th { border-right-color: #9b9b9b; text-align: center; vertical-align: bottom; }
.grid th.sel { background: #d2d2d2; color: #217346; }
.grid .corner { background: linear-gradient(135deg, #e6e6e6 60%, #b5b5b5 60%); }
.grid td { height: 24px; padding: 0 3px; font-family: Lato, sans-serif; font-size: 16px; line-height: 22px; color: #000; text-align: right; white-space: nowrap; overflow: hidden; border-right: 1px solid #d4d4d4; border-bottom: 1px solid #d4d4d4; }
.grid .filled td.data { background: #c6c6c6; border-color: transparent; }
.grid .filled:nth-child(even) td.data, .grid .filled:first-child td.data { background: #969696; }
.grid .filled td:nth-child(2) { text-align: left; }
.grid .filled:first-child td.data { height: 26px; color: #7a0000; font-size: 17px; font-weight: bold; font-style: italic; text-align: center; border-bottom: 1px solid #000; }
.grid .filled:first-child td.data:nth-child(2) { background: #c0c0c0; }
.selection { position: absolute; left: 33px; top: 23px; width: 1134px; height: 221px; border: 2px solid #217346; box-shadow: inset 0 0 0 1px #fff; }
.selection::after { content: ""; position: absolute; right: -4px; bottom: -4px; width: 5px; height: 5px; background: #217346; border: 1px solid #fff; box-sizing: content-box; }
.vscroll { flex: none; width: 25px; padding: 3px 4px 0 3px; display: flex; flex-direction: column; border-left: 1px solid #9b9b9b; }
.vscroll button, .hscroll button { flex: none; display: flex; align-items: center; justify-content: center; width: 18px; height: 18px; background: #fff; border: 1px solid #c0c0c0; }
.vscroll .track { flex: 1; padding: 1px 0 26px; background: #dadada; }
.vscroll .thumb { height: 100%; background: #fff; border: 1px solid #ababab; }
.tri { flex: none; width: 0; height: 0; border: 5px solid transparent; }
.tri.up { border-bottom-color: #666; border-top: none; }
.tri.down { border-top-color: #666; border-bottom: none; }
.tri.left { border-right-color: #666; border-left: none; }
.tri.right { border-left-color: #666; border-right: none; }
.tri.left.pale { border-right-color: #c0c0c0; }
.tri.right.pale { border-left-color: #c0c0c0; }

/* sheet tabs */
.sheettabs { flex: none; display: flex; align-items: center; height: 29px; padding: 0 24px 0 28px; border-top: 1px solid #9b9b9b; }
.sheettabs .right.pale { margin: 0 41px 0 24px; }
.sheettab { align-self: flex-start; height: 26px; padding: 0 14px; font-size: 16px; line-height: 21px; }
.current { background: #fff; color: #217346; font-weight: bold; margin-top: -1px; padding: 0 12px; border: 1px solid #9b9b9b; border-top: none; border-bottom: 2px solid #217346; }
.addsheet { padding-left: 34px; border-left: 1px solid #9b9b9b; }
.sheettabs .dots { margin: 0 15px 0 auto; }
.hscroll { display: flex; width: 39%; }
.hscroll .track { flex: 1; padding-right: 34px; background: #dadada; }
.hscroll .thumb { height: 18px; background: #fff; border: 1px solid #ababab; }

/* status bar */
.status { flex: none; display: flex; align-items: center; height: 28px; padding: 0 9px; background: #f1f1f1; border-top: 1px solid #c6c6c6; }
.macro { margin-right: auto; }
.view { display: flex; align-items: center; justify-content: center; width: 42px; height: 27px; }
.view.on { background: #c6c6c6; }
.zoom { width: 18px; font-size: 18px; line-height: 20px; font-weight: 600; color: #666; }
.slider { width: 126px; height: 16px; appearance: none; background: linear-gradient(#aaa, #aaa) center / 100% 1px no-repeat; }
.slider::-webkit-slider-thumb { appearance: none; width: 6px; height: 14px; background: #666; }
.percent { margin-left: 8px; font-size: 12px; }

/* taskbar */
.taskbar { flex: none; display: flex; height: 50px; background: #0a0a0a; color: #fff; }
.start { display: flex; align-items: center; justify-content: center; width: 60px; }
.search { display: flex; align-items: center; width: 430px; padding: 0 18px 0 11px; background: #f2f2f2; }
.search input { flex: 1; padding-left: 11px; font-size: 16px; color: #333; }
.search input::placeholder { color: #333; opacity: 1; }
.app { display: flex; align-items: center; justify-content: center; width: 50px; margin: 0 6px; border: 3px solid transparent; border-width: 3px 0; }
.app.open { border-bottom-color: #76b9ed; }
.app.open + .open { margin-left: 7px; }
.app.focus { width: 61px; background: #3c3c3c; border-top-color: #3c3c3c; }
.app.open + .focus { margin-left: 0; }
.tigertext { font-size: 9px; font-weight: bold; fill: #ffe08a; }
.tray { position: relative; display: flex; align-items: center; margin-left: auto; padding-right: 31px; }
.tray::after { content: ""; position: absolute; right: 5px; top: 0; height: 50px; width: 1px; background: #666; }
.desktop { color: #ddd; }
.more { width: 48px; padding-left: 9px; margin-top: -28px; font-size: 18px; }
.tray svg { margin-right: 23px; }
.clock { width: 62px; margin-right: 26px; line-height: 24px; text-align: center; white-space: nowrap; }
.tray .notice { position: relative; margin-top: -2px; }
.tray .notice svg { margin: 0; }
.count { position: absolute; left: 9px; top: 9px; width: 20px; height: 20px; border: 1px solid #888; border-radius: 50%; background: #3c3c3c; font-size: 13px; line-height: 18px; font-weight: bold; text-align: center; }

/* AutoFormat dialog */
.dialog { position: absolute; left: 257px; top: 159px; width: 687px; padding-bottom: 9px; background: #f0f0f0; border: 1px solid #1a6fb5; box-shadow: 0 4px 18px rgba(0, 0, 0, .4); font-size: 12px; color: #000; }
.dialog-title { display: flex; align-items: center; height: 37px; padding: 0 23px 0 9px; background: #fff; font-size: 14px; }
.dialog-title .help { margin: 0 47px 0 auto; font-size: 16px; }
.gallery { display: flex; justify-content: space-between; margin: 9px 10px 0 9px; }
.cards { display: grid; grid-template-columns: 302px 302px; column-gap: 14px; width: 646px; padding: 10px 13px 1px; border: 1px solid #dcdcdc; }
figure { height: 148px; }
.card { display: flex; align-items: center; justify-content: center; height: 123px; background: #fff; border: 1px solid #828790; }
figure:first-child .card { border-width: 3px; }
figcaption { line-height: 28px; text-align: center; }
.gallery-scroll { display: flex; flex-direction: column; align-items: center; width: 19px; padding: 8px 0 3px; border-left: 1px solid #fafafa; }
.gthumb { width: 19px; height: 60px; margin: 5px 0 auto; background: #cdcdcd; }
.card table { table-layout: fixed; border-collapse: collapse; font-family: Lato, sans-serif; font-size: 14px; }
.card th, .card td { height: 19px; padding: 0 1px; line-height: 17px; text-align: right; font-weight: normal; }
.card tbody th { text-align: left; }
.card thead th { padding-right: 10px; }
.card thead th:last-child { padding-right: 6px; }
.card tbody tr:last-child th, .card .classic2 tbody th, .card .classic3 tbody th, .card .simple thead th, .card .classic1 thead th:last-child, .card .classic2 thead th:last-child { font-weight: bold; }
.simple thead, .classic1 thead { border-top: 1px solid #000; border-bottom: 1px solid #000; }
.simple tbody tr:last-child, .classic1 tbody tr:last-child { border-top: 1px solid #000; border-bottom: 2px solid #000; }
.classic1 th:first-child { border-right: 1px solid #000; }
.classic1 thead th { font-style: italic; }
.card .classic2, .card .classic3, .card .acc1 { font-size: 13px; }
.card .classic2 th, .card .classic2 td, .card .classic3 th, .card .classic3 td { height: 18px; padding-right: 3px; line-height: 16px; }
.card .classic2 thead th, .card .classic3 thead th { height: 17px; line-height: 15px; }
.classic2 thead { background: #800080; color: #fff; border-top: 1px solid #000; border-bottom: 1px solid #000; }
.classic2 tbody th { background: #c0c0c0; }
.classic2 tbody tr:last-child { border-top: 1px solid #000; border-bottom: 1px solid #000; }
.classic2 tbody tr:last-child th { color: #000080; }
.card .classic3 { border: 2px solid #000; }
.card .classic3 thead th { background: #000080; color: #fff; font-weight: bold; font-style: italic; }
.classic3 tbody { background: #c0c0c0; }
.classic3 td { color: #000080; }
.classic3 tbody tr:last-child { background: #fff; border-top: 2px solid #000; }
.cur { float: left; }
.card .acc1 thead th { padding-right: 4px; font-weight: bold; font-style: italic; color: #7b8a7b; }
.card .acc1 thead th:last-child { padding-right: 3px; color: #000; }
.card .acc1 td { padding-right: 13px; }
.card .acc1 td:last-child { padding-right: 12px; }
.acc1 thead { border-bottom: 1px solid #000; }
.acc1 tbody tr:last-child { border-top: 1px solid #000; border-bottom: 1px solid #000; }
.card .acc1 tbody tr:last-child th { font-weight: normal; font-style: italic; }
.card .acc2 thead th { padding-right: 4px; }
.card .acc2 thead th:last-child { padding-right: 3px; }
.card .acc2 td { padding-right: 3px; }
.card .acc2 td:last-child { padding-right: 2px; }
.acc2 thead { border-top: 2px solid #800080; border-bottom: 1px solid #800080; }
.acc2 tbody tr:last-child { border-top: 1px solid #800080; border-bottom: 2px solid #800080; }
.card .acc2 tbody tr:last-child th { font-weight: normal; }
fieldset { position: relative; display: grid; grid-template-columns: 218px 218px 1fr; align-content: start; margin: 15px 10px 0 9px; height: 71px; padding: 15px 13px 0; border: 1px solid #dcdcdc; }
legend { position: absolute; left: 5px; top: -9px; padding: 0 3px; line-height: 18px; background: #f0f0f0; }
fieldset label { display: flex; align-items: center; gap: 5px; height: 25px; }
fieldset input { appearance: none; position: relative; width: 16px; height: 16px; background: #fff; border: 1px solid #333; }
fieldset input:checked::after { content: ""; position: absolute; left: 5px; top: 1px; width: 4px; height: 9px; border: solid #333; border-width: 0 1px 1px 0; transform: rotate(40deg); }
.dialog-buttons { display: flex; gap: 15px; margin: 17px 10px 0 9px; }
.dialog-buttons button { width: 112px; height: 29px; background: #e1e1e1; border: 1px solid #adadad; }
.dialog-buttons .options { margin-right: auto; padding: 2px; border: 2px solid #0078d7; }
.options span { display: block; line-height: 19px; border: 1px dotted #000; }
```
